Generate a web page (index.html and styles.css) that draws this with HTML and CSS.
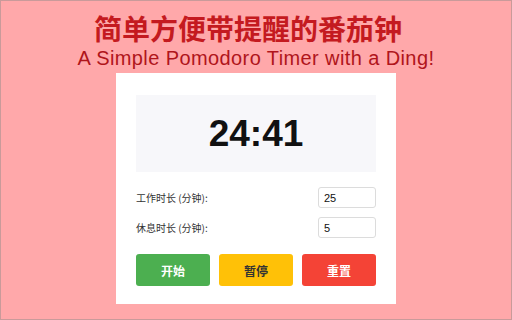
FILE: index.html
```html
<!DOCTYPE html>
<html>
<head>
<meta charset="utf-8">
<link rel="stylesheet" href="styles.css">
</head>
<body>
<div class="page">
  <div class="title-cn">简单方便带提醒的番茄钟</div>
  <div class="title-en">A Simple Pomodoro Timer with a Ding!</div>
  <div class="card">
    <div class="timer">24:41</div>
    <div class="row">
      <span class="label">工作时长 (分钟):</span>
      <input class="num" type="text" value="25">
    </div>
    <div class="row">
      <span class="label">休息时长 (分钟):</span>
      <input class="num" type="text" value="5">
    </div>
    <div class="buttons">
      <button class="btn start">开始</button>
      <button class="btn pause">暂停</button>
      <button class="btn reset">重置</button>
    </div>
  </div>
</div>
</body>
</html>
```
FILE: styles.css
```css
html, body {
  margin: 0;
  padding: 0;
}
body {
  width: 512px;
  height: 320px;
  box-sizing: border-box;
  background: #ffa8aa;
  border: 1px solid #c99a9a;
  font-family: "Liberation Sans", "Noto Sans CJK SC", sans-serif;
  overflow: hidden;
}
.page {
  display: flex;
  flex-direction: column;
  align-items: center;
  padding-top: 10px;
}
.title-cn {
  font-family: "Noto Sans CJK SC", sans-serif;
  font-size: 28px;
  font-weight: 600;
  line-height: 34px;
  color: #c41a20;
  margin-right: 16px;
}
.title-en {
  font-size: 20px;
  line-height: 22px;
  letter-spacing: 0.4px;
  color: #b0151b;
  margin-top: 2px;
}
.card {
  margin-top: 4px;
  width: 280px;
  box-sizing: border-box;
  background: #ffffff;
  padding: 22px 20px 18px 20px;
}
.timer {
  height: 77px;
  background: #f7f7fa;
  display: flex;
  align-items: center;
  justify-content: center;
  font-size: 37px;
  font-weight: bold;
  color: #111;
}
.row {
  display: flex;
  align-items: center;
  justify-content: space-between;
  margin-top: 15px;
  height: 21px;
}
.row + .row {
  margin-top: 9px;
}
.label {
  font-family: "Noto Sans CJK SC", sans-serif;
  font-size: 10px;
  color: #333;
}
.num {
  width: 58px;
  height: 21px;
  box-sizing: border-box;
  border: 1px solid #dcdcdc;
  border-radius: 3px;
  padding: 0 5px;
  font-family: "Liberation Sans", sans-serif;
  font-size: 11px;
  color: #111;
  background: #fff;
  outline: none;
}
.buttons {
  display: grid;
  grid-template-columns: 1fr 1fr 1fr;
  column-gap: 9px;
  margin-top: 16px;
}
.btn {
  height: 32px;
  border: none;
  border-radius: 3px;
  font-family: "Noto Sans CJK SC", sans-serif;
  font-size: 12px;
  font-weight: bold;
  color: #fff;
  padding: 0;
}
.start { background: #4caf50; }
.pause { background: #ffc107; color: #333; }
.reset { background: #f44336; }
```
